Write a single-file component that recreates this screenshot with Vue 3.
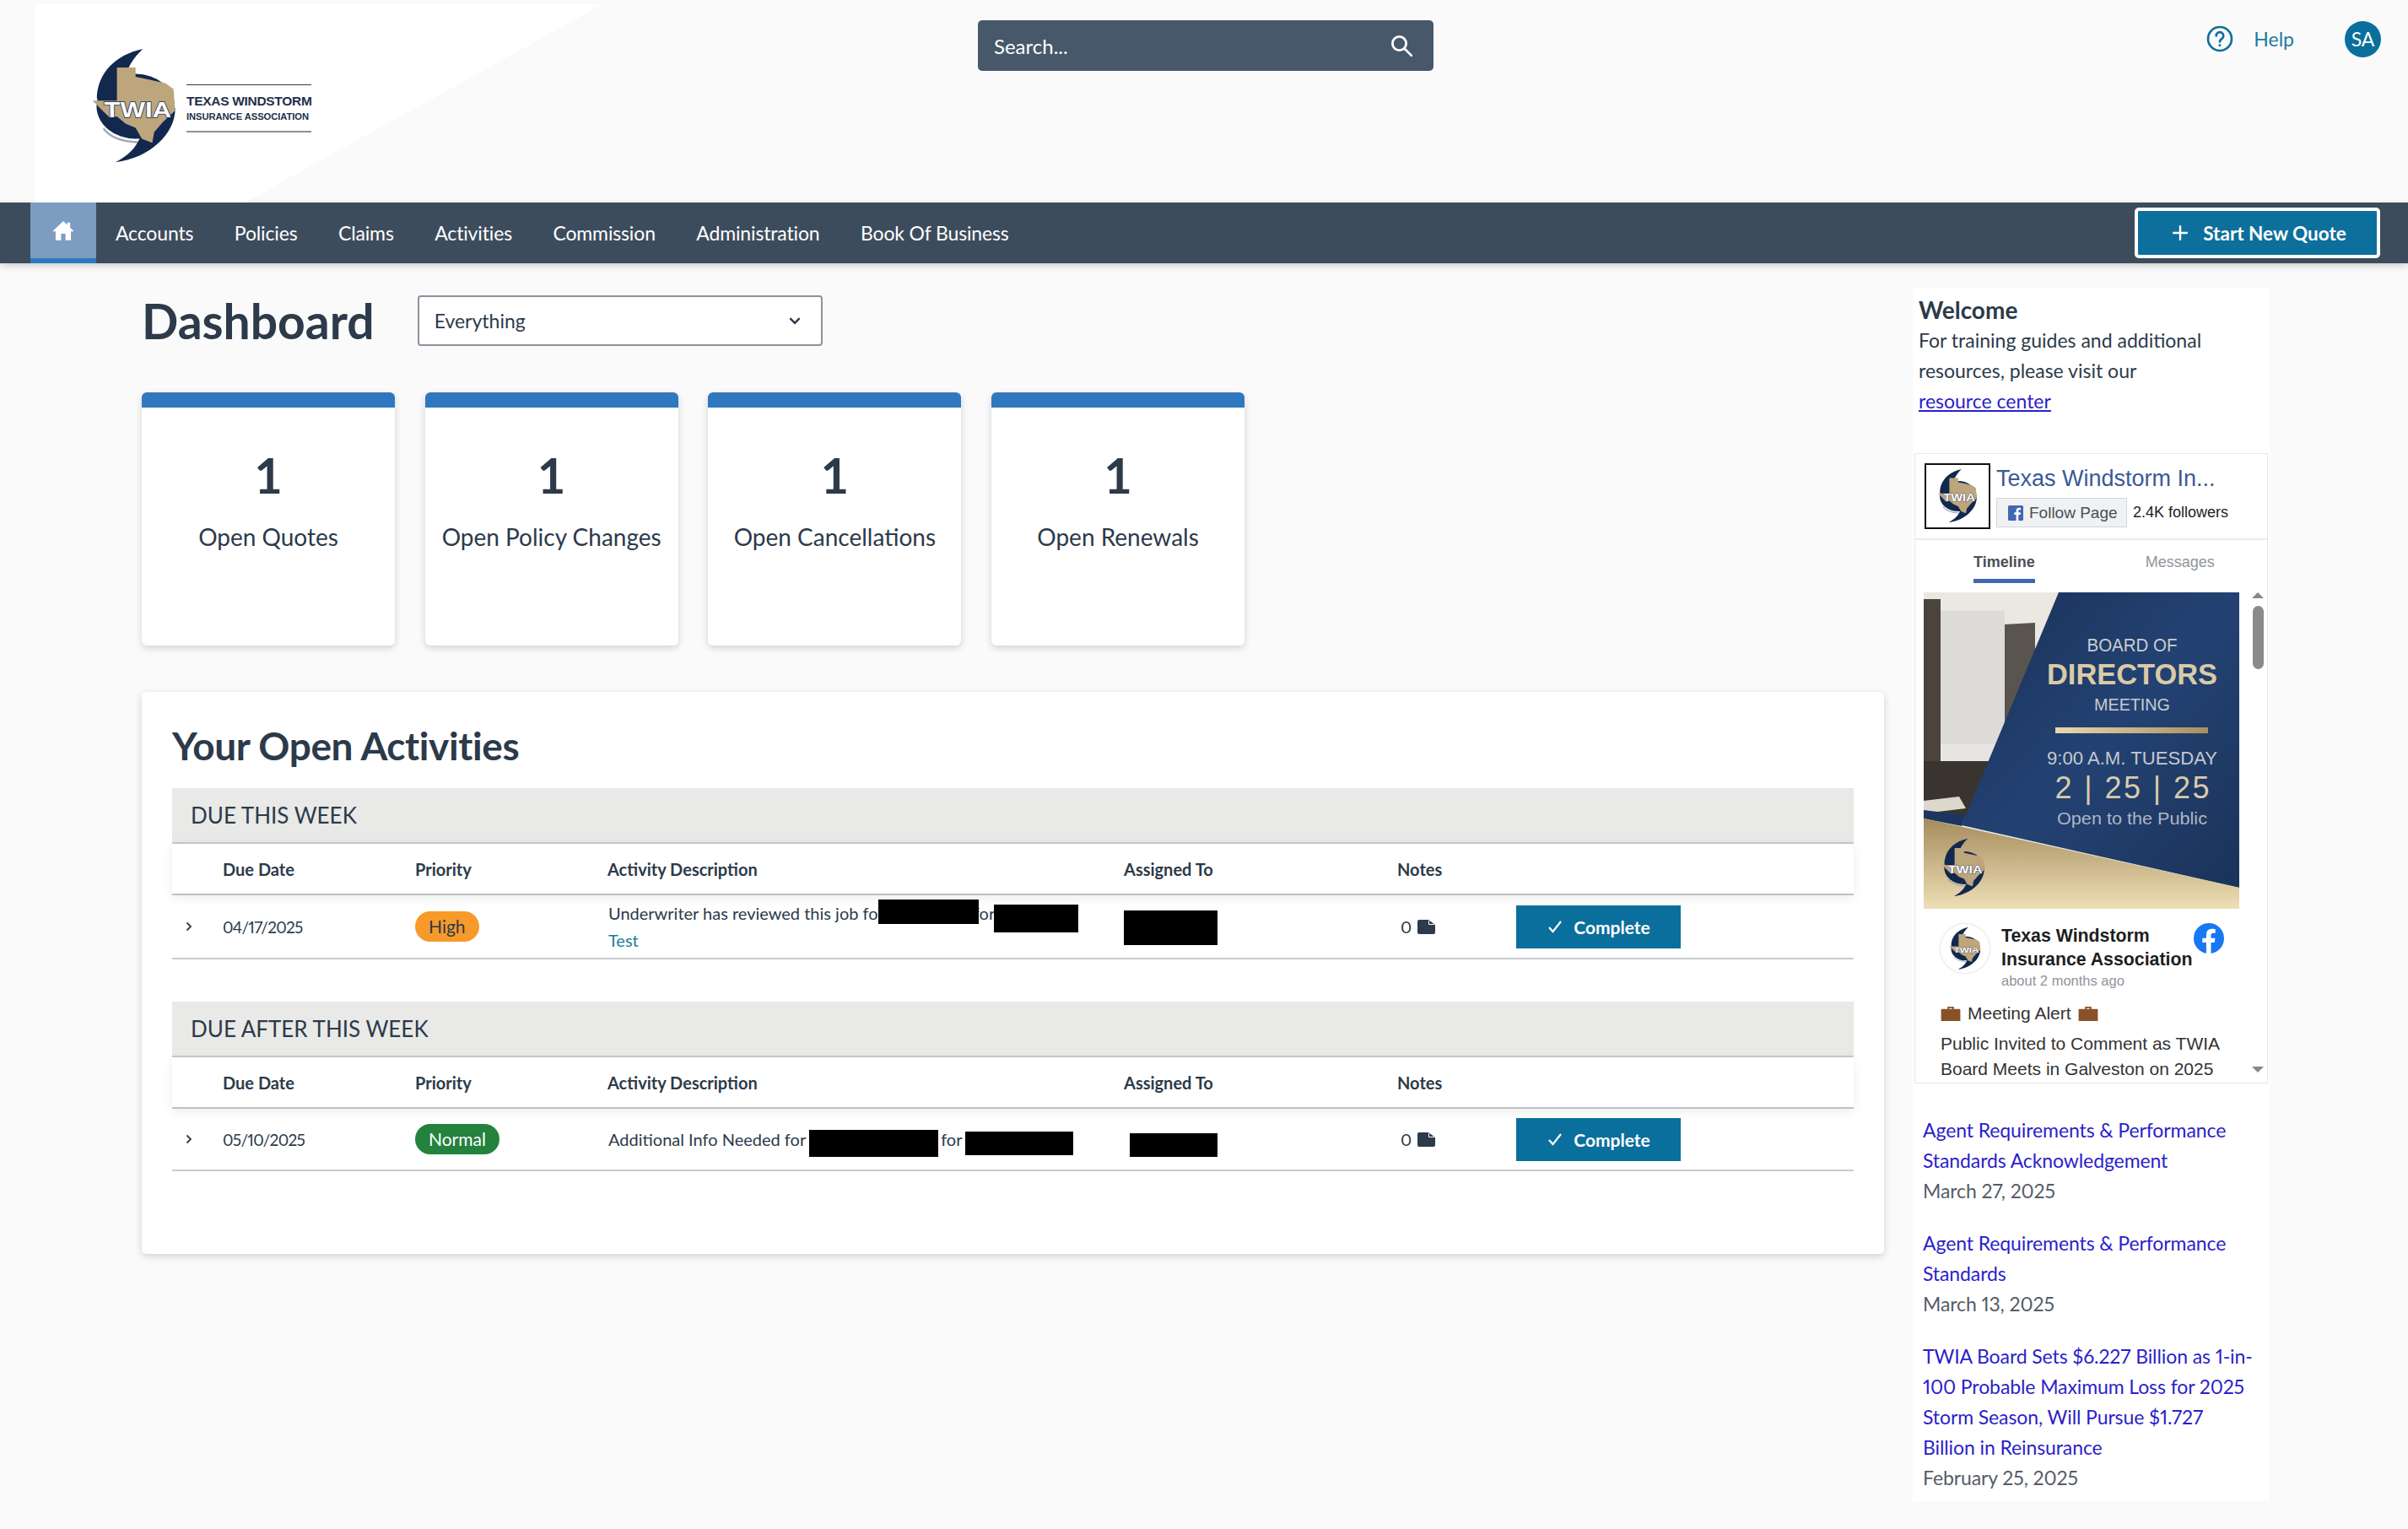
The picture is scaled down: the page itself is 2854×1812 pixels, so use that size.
<script setup>
const navItems = ['Accounts', 'Policies', 'Claims', 'Activities', 'Commission', 'Administration', 'Book Of Business']

const cards = ['Open Quotes', 'Open Policy Changes', 'Open Cancellations', 'Open Renewals']

const groups = [
  {
    title: 'DUE THIS WEEK',
    rows: [
      {
        date: '04/17/2025',
        priority: 'High',
        text: 'Underwriter has reviewed this job for',
        gap: 106,
        link: 'Test',
        height: 76,
        redactions: [
          { left: 837, top: 5, width: 119, height: 29 },
          { left: 974, top: 11, width: 100, height: 33 },
          { left: 1128, top: 18, width: 111, height: 41 },
        ],
      },
    ],
  },
  {
    title: 'DUE AFTER THIS WEEK',
    rows: [
      {
        date: '05/10/2025',
        priority: 'Normal',
        text: 'Additional Info Needed for',
        gap: 160,
        height: 74,
        redactions: [
          { left: 755, top: 25, width: 153, height: 32 },
          { left: 940, top: 27, width: 128, height: 28 },
          { left: 1135, top: 29, width: 104, height: 28 },
        ],
      },
    ],
  },
]

const news = [
  { title: 'Agent Requirements & Performance Standards Acknowledgement', date: 'March 27, 2025' },
  { title: 'Agent Requirements & Performance Standards', date: 'March 13, 2025' },
  { title: 'TWIA Board Sets $6.227 Billion as 1-in-100 Probable Maximum Loss for 2025 Storm Season, Will Pursue $1.727 Billion in Reinsurance', date: 'February 25, 2025' },
]
</script>

<template>
  <div class="page">
    <svg class="defs" width="0" height="0">
      <symbol id="twia" viewBox="85 80 300 410">
        <path d="M128 362C150 392 195 408 248 410" fill="none" stroke="#a3a8b2" stroke-width="7" />
        <path d="M265 85C170 105 105 170 105 260L200 210C205 150 235 115 265 85Z" fill="#12284f" />
        <path d="M378 290C380 380 290 465 170 480C215 455 240 430 255 395Z" fill="#12284f" />
        <ellipse cx="240" cy="285" rx="136" ry="113" fill="#12284f" />
        <path d="M175 150H240V182L290 192L345 205L372 225L378 300L335 340L305 375L298 412L262 398L240 360L205 345L175 320L150 325L120 295L90 265H175Z" fill="#bda57c" />
        <text x="130" y="322" textLength="235" lengthAdjust="spacingAndGlyphs" font-family="Liberation Sans, Arial, sans-serif" font-weight="700" font-size="78" fill="#fff" stroke="#12284f" stroke-width="4" paint-order="stroke">TWIA</text>
      </symbol>
    </svg>

    <header class="top">
      <div class="logo-block">
        <svg class="logo-mark"><use href="#twia" /></svg>
        <div class="logo-name">
          <span class="logo-line1">TEXAS WINDSTORM</span>
          <span class="logo-line2">INSURANCE ASSOCIATION</span>
        </div>
      </div>
      <div class="search">
        <span>Search...</span>
        <svg viewBox="0 0 24 24" width="30" height="30" fill="none" stroke="#fff" stroke-width="2.2">
          <circle cx="10" cy="10" r="6.5" />
          <path d="M15 15l6.5 6.5" stroke-linecap="round" />
        </svg>
      </div>
      <div class="top-right">
        <svg viewBox="0 0 24 24" width="32" height="32" fill="none" stroke="#0d6f9b" stroke-width="2">
          <circle cx="12" cy="12" r="10.5" />
          <path d="M8.8 9.3a3.2 3.2 0 1 1 4.9 2.7c-1.1.7-1.7 1.3-1.7 2.6" stroke-linecap="round" />
          <circle cx="12" cy="17.8" r="1.1" fill="#0d6f9b" stroke="none" />
        </svg>
        <span class="help">Help</span>
        <span class="avatar">SA</span>
      </div>
    </header>

    <nav class="nav">
      <a class="home">
        <svg viewBox="0 0 24 24" width="28" height="28" fill="#fff">
          <path d="M12 2.5L1 13h3.2v9h5.6v-6.5h4.4V22h5.6v-9H23l-4-3.8V4h-3v2.4z" />
        </svg>
      </a>
      <a v-for="item in navItems" :key="item" class="nav-item">{{ item }}</a>
      <button class="quote-btn">
        <svg viewBox="0 0 20 20" width="22" height="22" fill="none" stroke="#fff" stroke-width="2.2">
          <path d="M10 2v16M2 10h16" />
        </svg>
        Start New Quote
      </button>
    </nav>

    <div class="layout">
      <main class="content">
        <div class="title-row">
          <h1>Dashboard</h1>
          <div class="select">
            <span>Everything</span>
            <svg viewBox="0 0 16 16" width="18" height="18" fill="none" stroke="#2c3a4a" stroke-width="2.2">
              <path d="M3 5.5l5 5 5-5" />
            </svg>
          </div>
        </div>

        <div class="cards">
          <div v-for="card in cards" :key="card" class="card">
            <div class="card-num">1</div>
            <div class="card-label">{{ card }}</div>
          </div>
        </div>

        <section class="panel">
          <h2>Your Open Activities</h2>
          <div v-for="group in groups" :key="group.title" class="group">
            <div class="group-title">{{ group.title }}</div>
            <div class="grid-row head">
              <span></span>
              <span>Due Date</span>
              <span>Priority</span>
              <span>Activity Description</span>
              <span>Assigned To</span>
              <span>Notes</span>
              <span></span>
            </div>
            <div
              v-for="row in group.rows"
              :key="row.date"
              class="grid-row body"
              :style="{ height: row.height + 'px' }"
            >
              <svg class="expand" viewBox="0 0 10 14" width="10" height="14" fill="none" stroke="#2c3a4a" stroke-width="1.8">
                <path d="M2.5 2.5L7 7l-4.500 4.500" />
              </svg>
              <span class="date">{{ row.date }}</span>
              <span><span class="badge" :class="row.priority.toLowerCase()">{{ row.priority }}</span></span>
              <div class="desc">
                <div class="desc-line">
                  <span>{{ row.text }}</span>
                  <span :style="{ marginLeft: row.gap + 'px' }">for</span>
                </div>
                <a v-if="row.link" class="desc-link">{{ row.link }}</a>
              </div>
              <span></span>
              <span class="notes">
                0
                <svg viewBox="0 0 21 17" width="21" height="17">
                  <path d="M2 0H13L21 6V15a2 2 0 0 1-2 2H2a2 2 0 0 1-2-2V2a2 2 0 0 1 2-2z" fill="#2c3a4a" />
                  <path d="M13.500 1v4.500H20" fill="none" stroke="#fff" stroke-width="1" />
                </svg>
              </span>
              <button class="complete">
                <svg viewBox="0 0 20 20" width="20" height="20" fill="none" stroke="#fff" stroke-width="2.200">
                  <path d="M3 11l4.500 5L17 4" />
                </svg>
                Complete
              </button>
              <i
                v-for="(box, i) in row.redactions"
                :key="i"
                class="redact"
                :style="{ left: box.left + 'px', top: box.top + 'px', width: box.width + 'px', height: box.height + 'px' }"
              ></i>
            </div>
          </div>
        </section>
      </main>

      <aside class="side">
        <div class="welcome">
          <h3>Welcome</h3>
          <p>For training guides and additional resources, please visit our</p>
          <a>resource center</a>
        </div>

        <div class="fb">
          <div class="fb-head">
            <div class="fb-logo"><svg><use href="#twia" /></svg></div>
            <div class="fb-page">
              <div class="fb-name">Texas Windstorm In...</div>
              <div class="fb-follow">
                <span class="follow-btn">
                  <svg viewBox="0 0 18 18" width="18" height="18">
                    <rect width="18" height="18" rx="1.500" fill="#4267b2" />
                    <path d="M12.300 18v-7h2.300l.4-2.700h-2.700V6.600c0-.8.2-1.300 1.300-1.300H15V2.900c-.3 0-1.100-.1-2-.1-2 0-3.400 1.200-3.400 3.500v2H7.300V11h2.300v7z" fill="#fff" />
                  </svg>
                  Follow Page
                </span>
                <span class="followers">2.4K followers</span>
              </div>
            </div>
          </div>
          <div class="fb-tabs">
            <span class="tab active">Timeline</span>
            <span class="tab">Messages</span>
          </div>
          <div class="fb-feed">
            <div class="feed-main">
              <svg class="board" viewBox="0 0 374 375" width="374" height="375">
                <defs>
                  <linearGradient id="gold" x1="0" y1="0" x2="0" y2="1">
                    <stop offset="0" stop-color="#a58c5c" />
                    <stop offset="1" stop-color="#eedfb6" />
                  </linearGradient>
                  <linearGradient id="bar" x1="0" y1="0" x2="1" y2="0">
                    <stop offset="0" stop-color="#e8d8ae" />
                    <stop offset="1" stop-color="#a98f5e" />
                  </linearGradient>
                  <linearGradient id="navy" x1="0" y1="0" x2="1" y2="1">
                    <stop offset="0" stop-color="#1a3158" />
                    <stop offset="0.5" stop-color="#234273" />
                    <stop offset="1" stop-color="#1b3359" />
                  </linearGradient>
                </defs>
                <rect width="374" height="375" fill="#eae8e1" />
                <rect x="20" y="22" width="76" height="160" fill="#dcdbd7" />
                <rect y="8" width="20" height="195" fill="#4b443e" />
                <path d="M96 38L132 36V195H96Z" fill="#5a544e" />
                <rect x="20" y="180" width="100" height="20" fill="#e6e5e1" />
                <rect y="200" width="130" height="66" fill="#3a3430" />
                <path d="M0 247L42 242L50 256L0 262Z" fill="#ddd8cc" />
                <path d="M160 0H374V350L45 276Z" fill="url(#navy)" />
                <path d="M0 258L50 264L45 277L0 268Z" fill="#1d3660" />
                <path d="M0 268L374 350V375H0Z" fill="url(#gold)" />
                <text class="b-text" x="247" y="70" font-size="22" textLength="107" lengthAdjust="spacingAndGlyphs" fill="#c9ccd1">BOARD OF</text>
                <text class="b-text" x="247" y="109" font-size="35" font-weight="700" textLength="202" lengthAdjust="spacingAndGlyphs" fill="#d9cba8">DIRECTORS</text>
                <text class="b-text" x="247" y="140" font-size="20" textLength="90" lengthAdjust="spacingAndGlyphs" fill="#c9ccd1">MEETING</text>
                <rect x="156" y="160" width="181" height="7" fill="url(#bar)" />
                <text class="b-text" x="247" y="204" font-size="22" textLength="202" lengthAdjust="spacingAndGlyphs" fill="#c5c9cf">9:00 A.M. TUESDAY</text>
                <text class="b-text" x="247" y="244" font-size="36" textLength="183" fill="#d9cba8">2 | 25 | 25</text>
                <text class="b-text" x="247" y="275" font-size="21" textLength="178" lengthAdjust="spacingAndGlyphs" fill="#aeb6c4">Open to the Public</text>
                <svg x="21" y="291" width="52" height="71"><use href="#twia" /></svg>
              </svg>
              <div class="post-head">
                <div class="post-avatar"><svg><use href="#twia" /></svg></div>
                <div class="post-meta">
                  <div class="post-name">Texas Windstorm Insurance Association</div>
                  <div class="post-time">about 2 months ago</div>
                </div>
                <svg class="post-fb" viewBox="0 0 36 36" width="36" height="36">
                  <circle cx="18" cy="18" r="18" fill="#1877f2" />
                  <path d="M20.500 36V23h4.200l.8-5.200h-5v-3.300c0-1.400.7-2.800 2.900-2.800h2.300V7.200s-2-.4-4-.4c-4.100 0-6.800 2.500-6.800 7v4h-4.600V23h4.600v13z" fill="#fff" />
                </svg>
              </div>
              <div class="post-alert">
                <svg viewBox="0 0 24 20" width="24" height="19"><path d="M8 4V1h8v3h7a1 1 0 0 1 1 1v14H0V5a1 1 0 0 1 1-1zM10 4h4V3h-4z" fill="#8a5128" fill-rule="evenodd" /></svg>
                Meeting Alert
                <svg viewBox="0 0 24 20" width="24" height="19"><path d="M8 4V1h8v3h7a1 1 0 0 1 1 1v14H0V5a1 1 0 0 1 1-1zM10 4h4V3h-4z" fill="#8a5128" fill-rule="evenodd" /></svg>
              </div>
              <p class="post-text">Public Invited to Comment as TWIA Board Meets in Galveston on 2025 Storm Season</p>
            </div>
            <div class="scroll">
              <i class="arrow up"></i>
              <i class="thumb"></i>
              <i class="arrow down"></i>
            </div>
          </div>
        </div>

        <div class="news">
          <div v-for="item in news" :key="item.title" class="news-item">
            <a>{{ item.title }}</a>
            <div class="news-date">{{ item.date }}</div>
          </div>
        </div>
      </aside>
    </div>
  </div>
</template>

<style>
html,
body {
  margin: 0;
  background: #fafafb;
}
</style>

<style scoped>
.page {
  width: 2854px;
  height: 1812px;
  overflow: hidden;
  background: #fafafb;
  color: #2c3a4a;
  font-family: Lato, "Noto Sans", sans-serif;
  font-variant-numeric: proportional-nums;
}

.defs {
  position: absolute;
}

/* header */
.top {
  display: flex;
  height: 240px;
  padding-left: 42px;
}

.logo-block {
  display: flex;
  flex: none;
  align-items: center;
  width: 672px;
  height: 235px;
  margin-top: 5px;
  padding: 6px 0 0 66px;
  box-sizing: border-box;
  background: #fff;
  clip-path: polygon(0 0, 100% 0, 248px 100%, 0 100%);
}

.logo-mark {
  width: 102px;
  height: 140px;
  margin-right: 11px;
}

.logo-name {
  display: flex;
  flex-direction: column;
  justify-content: center;
  gap: 3px;
  width: 148px;
  height: 54px;
  margin-top: 5px;
  border-top: 1.5px solid #333b4c;
  border-bottom: 2px solid #8c909a;
  color: #232f4b;
  font-family: "Liberation Sans", Arial, sans-serif;
  font-weight: 700;
  white-space: nowrap;
}

.logo-line1 {
  font-size: 15.5px;
  letter-spacing: -0.3px;
}

.logo-line2 {
  font-size: 11.2px;
  letter-spacing: -0.05px;
}

.search {
  display: flex;
  flex: none;
  align-items: center;
  justify-content: space-between;
  width: 540px;
  height: 60px;
  margin: 24px 0 0 445px;
  padding: 0 23px 0 19px;
  box-sizing: border-box;
  border-radius: 5px;
  background: #47586b;
  color: #fff;
  font-size: 24px;
}

.top-right {
  display: flex;
  align-items: center;
  height: 46px;
  margin: 23px 32px 0 auto;
}

.help {
  margin: 0 60px 0 24px;
  color: #1f7a9c;
  font-size: 23px;
}

.avatar {
  display: flex;
  align-items: center;
  justify-content: center;
  width: 43px;
  height: 43px;
  border-radius: 50%;
  background: #0a6f9c;
  color: #fff;
  font-size: 23px;
}

/* nav */
.nav {
  display: flex;
  align-items: center;
  height: 72px;
  padding-left: 36px;
  background: #3d4c5d;
  box-shadow: 0 3px 8px rgba(0, 0, 0, 0.18);
}

.home {
  display: flex;
  align-items: center;
  justify-content: center;
  width: 78px;
  height: 72px;
  box-sizing: border-box;
  border-bottom: 6px solid #2f78bf;
  background: #7c9cc0;
}

.nav-item {
  margin-left: 23px;
  margin-right: 25.5px;
  color: #fff;
  font-size: 23px;
  letter-spacing: -0.15px;
}

.quote-btn {
  display: flex;
  align-items: center;
  justify-content: center;
  gap: 16px;
  width: 291px;
  height: 60px;
  margin: 0 33px 0 auto;
  padding-left: 9px;
  border: 4px solid #fff;
  border-radius: 5px;
  background: #0d6f9b;
  color: #fff;
  font-family: inherit;
  font-size: 22.5px;
  font-weight: 700;
}

/* main */
.layout {
  display: flex;
}

.content {
  flex: none;
  width: 2065px;
  margin-left: 168px;
}

.title-row {
  display: flex;
  align-items: center;
  gap: 51px;
  height: 59px;
  margin-top: 38px;
}

h1 {
  margin: 0;
  font-size: 57px;
  font-weight: 700;
}

.select {
  display: flex;
  align-items: center;
  justify-content: space-between;
  width: 480px;
  height: 60px;
  padding: 0 22px 0 18px;
  box-sizing: border-box;
  border: 2px solid #8a929c;
  border-radius: 4px;
  background: #fff;
  font-size: 23px;
}

.cards {
  display: flex;
  gap: 35.7px;
  margin-top: 56px;
}

.card {
  width: 300px;
  height: 300px;
  box-sizing: border-box;
  border-top: 18px solid #2f78bf;
  border-radius: 6px;
  background: #fff;
  box-shadow: 0 3px 8px rgba(0, 0, 0, 0.16);
  text-align: center;
}

.card-num {
  margin-top: 44px;
  font-size: 58px;
  font-variant-numeric: tabular-nums;
  font-weight: 700;
  line-height: 72px;
}

.card-label {
  margin-top: 20px;
  font-size: 28px;
}

.panel {
  height: 666px;
  margin-top: 55px;
  padding: 0 36px;
  box-sizing: border-box;
  border-radius: 5px;
  background: #fff;
  box-shadow: 0 3px 10px rgba(0, 0, 0, 0.16);
}

h2 {
  margin: 0;
  padding-top: 34px;
  font-size: 46px;
  font-weight: 700;
  letter-spacing: -0.4px;
  line-height: 60px;
  height: 114px;
  box-sizing: border-box;
}

.group {
  margin-bottom: 50px;
}

.group-title {
  display: flex;
  align-items: center;
  height: 66px;
  padding-left: 22px;
  border-bottom: 2px solid #c8c9c8;
  background: #e9e9e7;
  font-size: 26px;
  box-sizing: border-box;
}

.grid-row {
  position: relative;
  display: grid;
  grid-template-columns: 60px 228px 228px 612px 324px 141px 1fr;
  align-items: center;
  box-sizing: border-box;
  font-size: 20px;
}

.head {
  height: 61px;
  border-bottom: 2px solid #bcc1c6;
  box-shadow: 0 3px 12px rgba(0, 0, 0, 0.08);
  font-weight: 700;
}

.body {
  border-bottom: 2px solid #c8cbce;
}

.expand {
  margin-left: 15px;
}

.date {
  font-size: 19px;
  letter-spacing: -0.7px;
}

.badge {
  display: inline-block;
  padding: 0 16px;
  height: 36px;
  border-radius: 18px;
  font-size: 21px;
  line-height: 36px;
}

.high {
  background: #f79a2a;
  color: #2c3a4a;
}

.normal {
  background: #23823e;
  color: #fff;
}

.desc {
  line-height: 32px;
  padding-left: 1px;
}

.desc-line {
  display: flex;
}

.desc-link {
  color: #1f7a9c;
}

.notes {
  display: flex;
  align-items: center;
  gap: 7px;
  padding-left: 4px;
}

.complete {
  display: flex;
  align-items: center;
  justify-content: center;
  gap: 12px;
  width: 195px;
  height: 51px;
  border: 0;
  background: #0a6f9c;
  color: #fff;
  font-family: inherit;
  font-size: 21px;
  font-weight: 700;
}

.redact {
  position: absolute;
  background: #000;
}

/* sidebar */
.side {
  flex: none;
  width: 423px;
  margin-left: 34px;
  margin-top: 30px;
  background: #fff;
}

.welcome {
  height: 195px;
  padding: 7px 7px 0;
  box-sizing: border-box;
  font-size: 23px;
  line-height: 36px;
}

.welcome h3 {
  margin: 0;
  font-size: 28px;
  font-weight: 700;
}

.welcome p {
  margin: 0;
}

.welcome a {
  color: #2b1fc9;
  text-decoration: underline;
}

.fb {
  height: 747px;
  margin: 0 2px;
  overflow: hidden;
  border: 1px solid #e7e8ea;
  box-sizing: border-box;
  font-family: "Liberation Sans", Arial, sans-serif;
}

.fb-head {
  display: flex;
  gap: 7px;
  height: 102px;
  padding: 11px 0 0 11px;
  box-sizing: border-box;
  border-bottom: 2px solid #e9ebee;
}

.fb-logo {
  width: 78px;
  height: 78px;
  box-sizing: border-box;
  border: 2px solid #111;
  padding: 4px 13px;
  flex: none;
}

.fb-logo svg,
.post-avatar svg {
  display: block;
  width: 100%;
  height: 100%;
}

.fb-name {
  margin-top: 2px;
  color: #3b5998;
  font-size: 27px;
  line-height: 32px;
}

.fb-follow {
  display: flex;
  align-items: center;
  gap: 7px;
  margin-top: 7px;
}

.follow-btn {
  display: flex;
  align-items: center;
  gap: 7px;
  width: 155px;
  height: 35px;
  padding-left: 13px;
  box-sizing: border-box;
  border: 1px solid #d3d6db;
  background: #f0f1f3;
  color: #4b4f56;
  font-size: 19px;
}

.followers {
  color: #1d2129;
  font-size: 18px;
}

.fb-tabs {
  display: flex;
  height: 62px;
}

.tab {
  margin-left: 131px;
  margin-top: 14px;
  height: 37px;
  box-sizing: border-box;
  color: #90949c;
  font-size: 18px;
  line-height: 24px;
}

.tab.active {
  margin-left: 69px;
  border-bottom: 5px solid #4267b2;
  color: #4b4f56;
  font-weight: 700;
}

.fb-feed {
  display: flex;
  padding-left: 10px;
}

.feed-main {
  width: 374px;
  flex: none;
}

.board {
  display: block;
}

.b-text {
  font-family: "Liberation Sans", Arial, sans-serif;
  text-anchor: middle;
}

.post-head {
  position: relative;
  display: flex;
  gap: 14px;
  padding: 18px 0 0 20px;
}

.post-avatar {
  flex: none;
  width: 58px;
  height: 58px;
  padding: 3px 9px;
  box-sizing: border-box;
  border-radius: 50%;
  box-shadow: 0 0 3px rgba(0, 0, 0, 0.2);
}

.post-name {
  width: 240px;
  color: #1c1e21;
  font-size: 21.3px;
  font-weight: 700;
  line-height: 28px;
}

.post-time {
  color: #90949c;
  font-size: 16.5px;
  line-height: 22px;
}

.post-fb {
  position: absolute;
  top: 17px;
  left: 320px;
}

.post-alert {
  display: flex;
  align-items: center;
  gap: 8px;
  margin-top: 12px;
  padding-left: 20px;
  color: #333;
  font-size: 21px;
  line-height: 32px;
}

.post-text {
  margin: 5px 0 0;
  padding-left: 20px;
  width: 345px;
  color: #333;
  font-size: 21px;
  line-height: 30px;
}

.scroll {
  display: flex;
  flex-direction: column;
  align-items: center;
  width: 22px;
  height: 580px;
  margin-left: 11px;
}

.arrow {
  width: 0;
  height: 0;
  border-left: 7px solid transparent;
  border-right: 7px solid transparent;
}

.arrow.up {
  border-bottom: 7px solid #888;
}

.arrow.down {
  margin-top: auto;
  border-top: 7px solid #888;
  margin-bottom: 11px;
}

.thumb {
  width: 13px;
  height: 75px;
  margin-top: 9px;
  border-radius: 7px;
  background: #8a8a8a;
}

.news {
  height: 495px;
  padding: 37px 12px 0 12px;
  box-sizing: border-box;
  font-size: 23px;
  letter-spacing: -0.1px;
  line-height: 36px;
}

.news-item {
  margin-bottom: 26px;
}

.news a {
  color: #2b1fc9;
}

.news-date {
  color: #555c66;
}
</style>
